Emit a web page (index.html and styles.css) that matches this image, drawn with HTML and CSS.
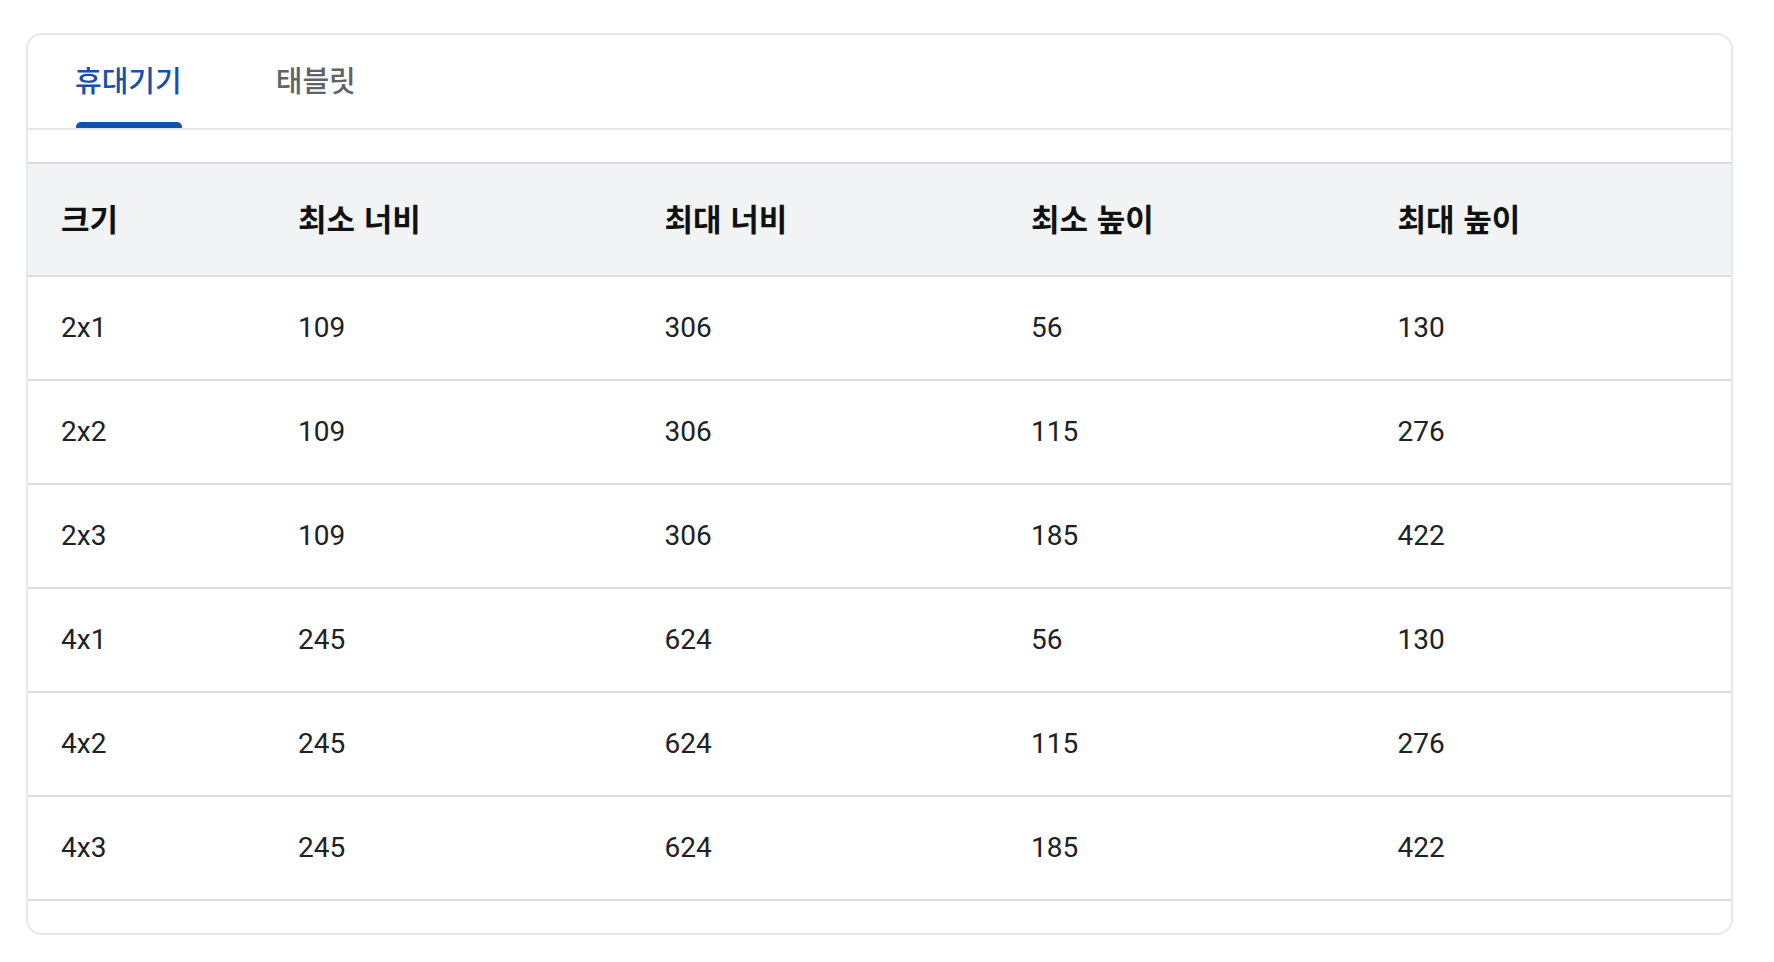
FILE: index.html
```html
<!DOCTYPE html>
<html lang="ko">
<head>
<meta charset="utf-8">
<title>위젯 크기</title>
<link rel="stylesheet" href="styles.css">
</head>
<body>
<div class="card">
  <div class="tabs">
    <div class="tab active">휴대기기</div>
    <div class="tab">태블릿</div>
  </div>
  <div class="panel">
    <table class="sizes">
      <colgroup>
        <col class="c-first">
        <col>
        <col>
        <col>
        <col>
      </colgroup>
      <thead>
        <tr><th>크기</th><th>최소 너비</th><th>최대 너비</th><th>최소 높이</th><th>최대 높이</th></tr>
      </thead>
      <tbody>
        <tr><td>2x1</td><td>109</td><td>306</td><td>56</td><td>130</td></tr>
        <tr><td>2x2</td><td>109</td><td>306</td><td>115</td><td>276</td></tr>
        <tr><td>2x3</td><td>109</td><td>306</td><td>185</td><td>422</td></tr>
        <tr><td>4x1</td><td>245</td><td>624</td><td>56</td><td>130</td></tr>
        <tr><td>4x2</td><td>245</td><td>624</td><td>115</td><td>276</td></tr>
        <tr><td>4x3</td><td>245</td><td>624</td><td>185</td><td>422</td></tr>
      </tbody>
    </table>
  </div>
</div>
</body>
</html>
```

FILE: styles.css
```css
html, body {
  margin: 0;
  background: #ffffff;
}

body {
  padding: 33px 41px 0 26px;
  font-family: Roboto, "Noto Sans CJK KR", sans-serif;
}

.card {
  border: 2px solid #e6e8eb;
  border-radius: 16px;
  overflow: hidden;
  background: #ffffff;
}

.tabs {
  display: flex;
  gap: 94px;
  height: 93px;
  padding-left: 47px;
  border-bottom: 2px solid #e6e8eb;
}

.tab {
  position: relative;
  display: flex;
  align-items: center;
  padding-bottom: 5px;
  box-sizing: border-box;
  font-family: "Noto Sans CJK KR", sans-serif;
  font-size: 29px;
  font-weight: 500;
  color: #5f6368;
}

.tab.active {
  color: #1a4fa6;
}

.tab.active::after {
  content: "";
  position: absolute;
  left: 1px;
  right: 0;
  bottom: 0;
  height: 6px;
  border-radius: 5px 5px 0 0;
  background: #1a4fa6;
}

.panel {
  padding: 32px 0;
}

.sizes {
  width: 100%;
  border-collapse: collapse;
  table-layout: fixed;
}

.c-first {
  width: 237px;
}

.sizes th,
.sizes td {
  text-align: left;
  padding: 0 0 0 33px;
  vertical-align: middle;
}

.sizes thead tr {
  background: #f1f3f4;
  border-top: 2px solid #dadce0;
  border-bottom: 2px solid #dadce0;
}

.sizes th {
  height: 106px;
  padding-bottom: 5px;
  font-family: "Noto Sans CJK KR", sans-serif;
  font-size: 31px;
  font-weight: 700;
  color: #111111;
}

.sizes tbody tr {
  border-bottom: 2px solid #dadce0;
}

.sizes td {
  height: 100px;
  padding-bottom: 2px;
  font-family: Roboto, sans-serif;
  font-size: 28px;
  font-weight: 400;
  color: #202124;
}
```
